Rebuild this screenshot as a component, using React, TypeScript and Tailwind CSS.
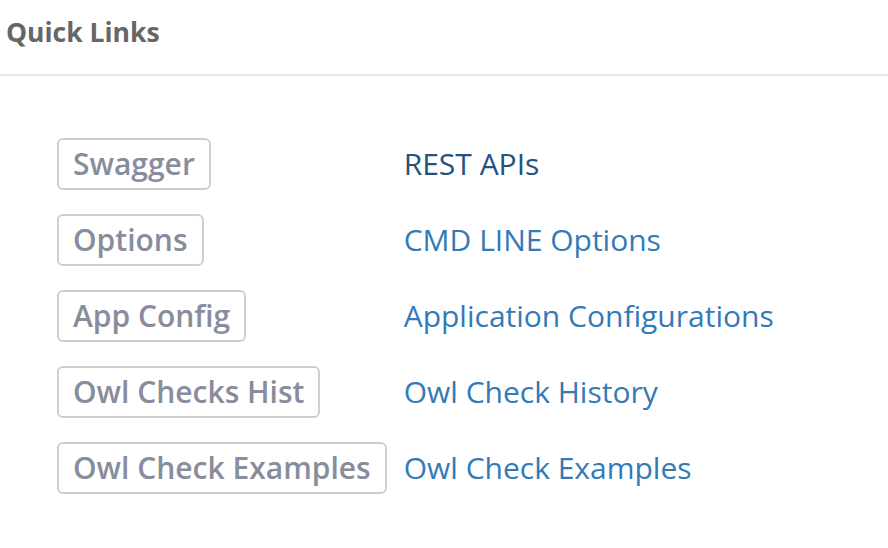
import React from 'react';

const links = [
  { badge: 'Swagger', label: 'REST APIs', active: true },
  { badge: 'Options', label: 'CMD LINE Options' },
  { badge: 'App Config', label: 'Application Configurations' },
  { badge: 'Owl Checks Hist', label: 'Owl Check History' },
  { badge: 'Owl Check Examples', label: 'Owl Check Examples' },
];

export default function App() {
  return (
    <div className="w-[888px] h-[548px] bg-white overflow-hidden" style={{ fontFamily: '"Open Sans", sans-serif' }}>
      {/* Header */}
      <div className="h-[76px] border-b-2 border-[#e6e6e6] px-[6px] pt-[13px]">
        <h2 className="text-[26.5px] font-bold text-[#666] leading-[38px]">Quick Links</h2>
      </div>

      {/* Links table */}
      <div className="pl-[57px] pt-[62px] grid grid-cols-[auto_1fr] gap-x-[17px] gap-y-[24px] items-center">
        {links.map((l) => (
          <React.Fragment key={l.badge}>
            <div>
              <span className="inline-block border-2 border-[#cfcfcf] rounded-[6px] px-[14px] py-[6px] text-[30px] leading-[36px] font-semibold text-[#878d9c]">
                {l.badge}
              </span>
            </div>
            <a
              href="#"
              className={`text-[30px] leading-[36px] ${l.active ? 'text-[#23527c]' : 'text-[#337ab7]'}`}
            >
              {l.label}
            </a>
          </React.Fragment>
        ))}
      </div>
    </div>
  );
}
